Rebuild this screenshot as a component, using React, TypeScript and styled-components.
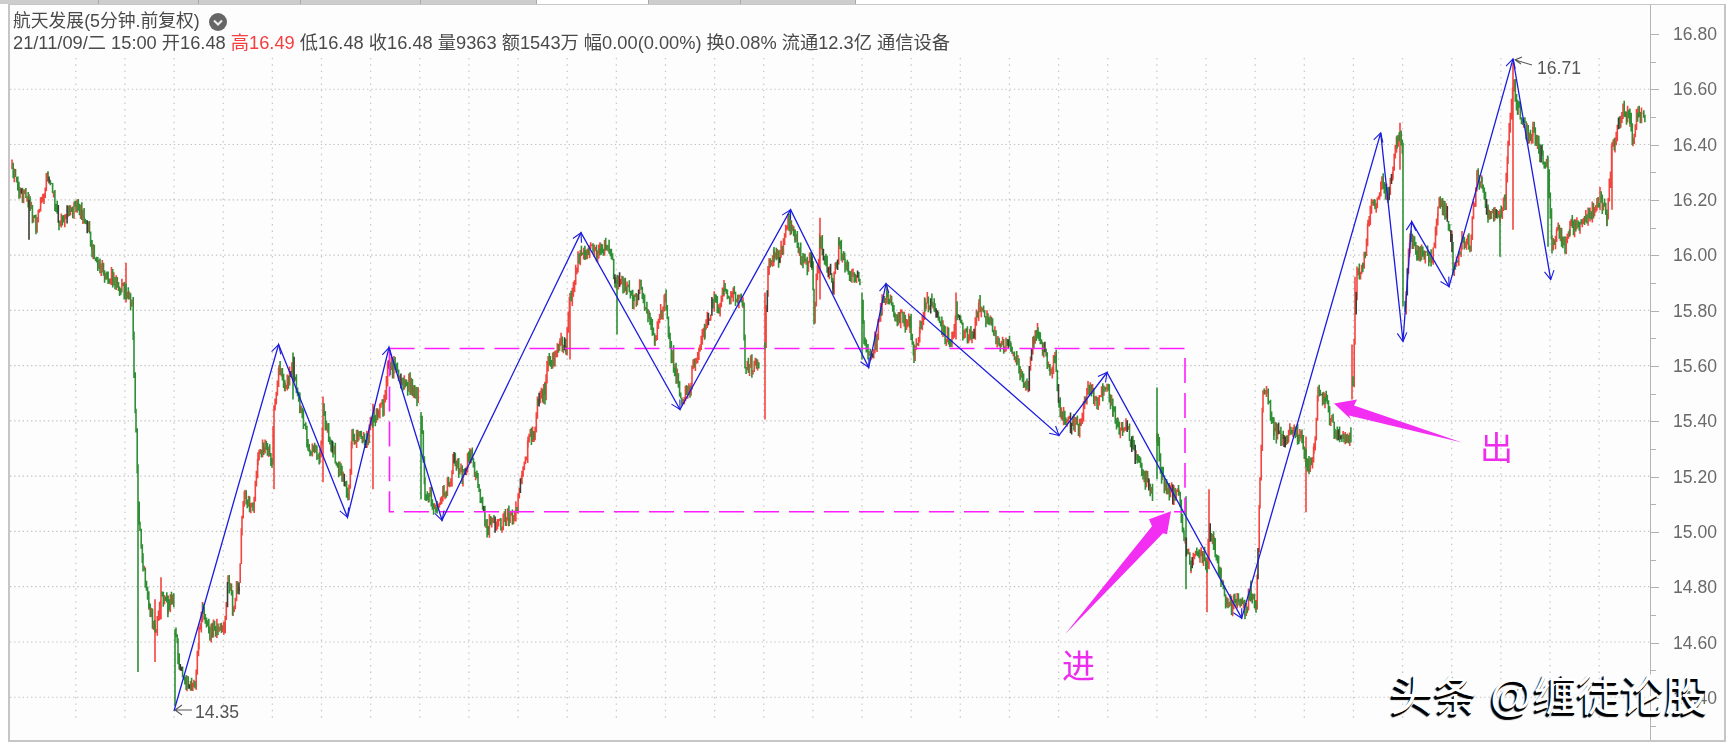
import styled, { createGlobalStyle } from "styled-components";

const FONT = `"Liberation Sans", "Noto Sans CJK SC", sans-serif`;

const GlobalStyle = createGlobalStyle`
  html, body {
    margin: 0;
    padding: 0;
    background: #fff;
    overflow: hidden;
  }
`;

const Page = styled.div`
  display: flex;
  flex-direction: column;
  width: 1729px;
  height: 743px;
  font-family: ${FONT};
  background: #fff;
`;

const TabStrip = styled.div`
  display: flex;
  flex: none;
  height: 4px;
`;

const Tab = styled.div<{ $w: number; $active?: boolean }>`
  width: ${(p) => p.$w}px;
  box-sizing: border-box;
  background: ${(p) => (p.$active ? "#fff" : "#cdcdcd")};
  border-right: 1px solid #a9a9a9;
`;

const Frame = styled.div`
  display: flex;
  flex: 1;
  min-height: 0;
  margin: 0 3px 1px 8px;
  border: 2px solid #c6c6c6;
  border-top-width: 1px;
  background: #fdfdfd;
`;

const Plot = styled.div`
  position: relative;
  flex: 1;
  min-width: 0;
`;

const ChartSvg = styled.svg`
  position: absolute;
  inset: 0;
  width: 100%;
  height: 100%;
  filter: blur(0.4px);
`;

const Legend = styled.div`
  position: relative;
  padding: 5px 0 0 3px;
  color: #4a4a4a;
  filter: blur(0.4px);
`;

const LegendTitle = styled.div`
  display: flex;
  align-items: center;
  gap: 9px;
  height: 23px;
  font-size: 17.8px;
  line-height: 23px;
`;

const LegendLine = styled.div`
  height: 20px;
  font-size: 18.25px;
  line-height: 20px;
  white-space: pre;
`;

const Up = styled.span`
  color: #f43d3d;
`;

const Axis = styled.div`
  flex: none;
  width: 74px;
  box-sizing: border-box;
  padding-top: 15.5px;
  border-left: 1px solid #b4b4b4;
  overflow: hidden;
  filter: blur(0.4px);
`;

const AxisRow = styled.div`
  display: flex;
  align-items: center;
  height: 27.675px;
  gap: 14px;
`;

const Tick = styled.i<{ $major: boolean }>`
  flex: none;
  width: ${(p) => (p.$major ? 8 : 5)}px;
  height: 1px;
  background: #b0b0b0;
`;

const AxisLabel = styled.span`
  font-size: 17.6px;
  color: #6a6a6a;
`;

const ChartText = styled.text`
  font-family: ${FONT};
  font-size: 17.6px;
  fill: #555;
`;

const NoteText = styled.text`
  font-family: ${FONT};
  font-size: 33px;
  fill: #ee2cee;
`;

const Watermark = styled.div`
  position: absolute;
  right: 21px;
  bottom: 22px;
  font-size: 43.6px;
  line-height: 50px;
  color: #fff;
  text-shadow: -1px 2px 0 #000, -2px 3px 1px #000;
  white-space: pre;
`;

type Pt = [number, number];

const segments: Pt[][] = [
  [[12, 168], [19, 190], [29, 200], [36, 226], [48, 175], [59, 220], [76, 205], [86, 220], [92, 250], [100, 270], [115, 283], [126, 290], [132, 303], [134, 373], [136, 437], [138, 497], [140, 533], [143, 567], [149, 607], [155, 635], [161, 597], [168, 607], [174, 597]],
  [[176, 630], [178, 657], [187, 685], [195, 683], [199, 633], [203, 608], [210, 633], [218, 627], [224, 630], [228, 575], [233, 610], [239, 583], [242, 517], [245, 497], [253, 513], [258, 457], [264, 447], [272, 463], [274, 415], [279, 367], [285, 393], [293, 367], [300, 407], [310, 453], [320, 457], [323, 415], [333, 450], [342, 477], [348, 503], [352, 437], [367, 440], [373, 417], [383, 410], [388, 367], [394, 367], [402, 387], [409, 383], [419, 398]],
  [[421, 413], [425, 490], [429, 497], [436, 507], [444, 493], [452, 477], [453, 457], [463, 477], [470, 453], [478, 483], [486, 527], [494, 527], [509, 517], [517, 510], [522, 477], [528, 443], [534, 433], [538, 397], [545, 393], [547, 363], [555, 357], [560, 340], [566, 348], [570, 300], [578, 260], [585, 253], [600, 250], [608, 243], [615, 280], [627, 287], [634, 303], [640, 288], [650, 320], [655, 343], [665, 297], [669, 343], [675, 370], [682, 400], [690, 393], [692, 367], [705, 330], [715, 297], [719, 313], [724, 290], [743, 302], [745, 365], [759, 370]],
  [[765, 345], [768, 270], [774, 257], [780, 257], [788, 222], [795, 237], [805, 267], [812, 260], [814, 313], [820, 240], [826, 263], [833, 287], [839, 247], [845, 267], [860, 283]],
  [[862, 297], [864, 340], [868, 357], [876, 340], [881, 307], [887, 293], [895, 317], [910, 323], [914, 360], [920, 330], [925, 303], [935, 307], [944, 333], [952, 343], [956, 313], [964, 333], [973, 337], [979, 307], [988, 320], [998, 343], [1011, 350], [1019, 370], [1027, 390], [1034, 337], [1038, 333], [1050, 370], [1055, 357], [1059, 407], [1067, 423], [1080, 427], [1088, 387], [1097, 403], [1107, 387], [1113, 410], [1118, 430], [1126, 427], [1136, 457], [1143, 477], [1149, 483], [1153, 497]],
  [[1157, 440], [1162, 478], [1167, 493], [1179, 497], [1184, 537], [1191, 567], [1200, 553], [1207, 567], [1209, 530], [1214, 543], [1221, 577], [1228, 607], [1239, 603], [1245, 610], [1251, 593], [1256, 607], [1258, 553], [1260, 480], [1263, 393], [1267, 390], [1274, 430], [1284, 440], [1293, 430], [1302, 437], [1306, 460], [1309, 467], [1314, 453], [1318, 395], [1325, 403], [1335, 433], [1344, 443], [1351, 437]],
  [[1353, 380], [1355, 310], [1357, 277], [1363, 267], [1368, 227], [1372, 197], [1375, 213], [1382, 175], [1388, 200], [1393, 167], [1397, 140], [1400, 128], [1403, 150]],
  [[1405, 303], [1410, 237], [1417, 253], [1423, 253], [1432, 263], [1438, 207], [1445, 210], [1452, 240], [1453, 275], [1462, 243], [1470, 243], [1477, 177], [1482, 187], [1488, 213], [1500, 217], [1505, 200], [1508, 147], [1513, 80], [1518, 110], [1527, 133], [1533, 133], [1543, 160], [1548, 170], [1552, 247], [1557, 227], [1565, 243], [1570, 227], [1580, 227], [1590, 213], [1600, 197], [1607, 220], [1612, 147], [1615, 143], [1623, 107], [1630, 123], [1633, 140], [1638, 113], [1645, 121]],
];

// wicks too long to come out of the random walk
const spikes: [number, number, number, "r" | "g" | "k"][] = [
  [29, 200, 240, "k"], [126, 263, 303, "r"], [138, 497, 673, "g"], [155, 600, 663, "r"],
  [161, 578, 620, "r"], [175, 630, 707, "g"], [274, 407, 490, "r"], [293, 353, 400, "g"],
  [323, 397, 483, "r"], [373, 417, 490, "r"], [421, 413, 500, "g"], [570, 300, 360, "r"],
  [617, 280, 335, "g"], [765, 293, 420, "r"], [814, 300, 325, "g"], [820, 218, 300, "r"],
  [862, 293, 360, "g"], [956, 293, 340, "r"], [1157, 388, 480, "g"], [1186, 497, 590, "g"],
  [1207, 567, 613, "r"], [1209, 490, 570, "r"], [1306, 437, 513, "r"], [1352, 345, 400, "r"],
  [1355, 277, 340, "r"], [1403, 143, 307, "g"], [1400, 123, 170, "r"], [1500, 217, 257, "g"],
  [1513, 63, 230, "r"], [1548, 160, 247, "g"], [1612, 147, 210, "r"],
];

const zigzag: Pt[] = [
  [174, 712], [278.6, 345], [347.5, 518], [389, 348], [442, 521], [581, 233], [680, 410],
  [790.6, 210], [868.7, 368], [886, 284], [1059, 436], [1107, 373], [1241.7, 619],
  [1380.7, 133], [1403, 342], [1411.7, 222], [1449, 287], [1513, 59], [1550.7, 280],
];

const mulberry = (seed: number) => () => {
  seed = (seed + 0x6d2b79f5) | 0;
  let t = Math.imul(seed ^ (seed >>> 15), 1 | seed);
  t = (t + Math.imul(t ^ (t >>> 7), 61 | t)) ^ t;
  return ((t ^ (t >>> 14)) >>> 0) / 4294967296;
};

const buildBars = () => {
  const rnd = mulberry(20211109);
  const paths = { r: "", g: "", k: "" };
  for (const seg of segments) {
    let prev = seg[0][1];
    for (let i = 0; i < seg.length - 1; i++) {
      const [x0, y0] = seg[i];
      const [x1, y1] = seg[i + 1];
      for (let x = x0; x < x1; x += 1.15) {
        const base = y0 + ((x - x0) / (x1 - x0)) * (y1 - y0);
        const close = base + (rnd() - 0.5) * 14;
        const top = Math.min(prev, close) - rnd() * 6;
        const bot = Math.max(prev, close) + rnd() * 6;
        const key = rnd() < 0.05 ? "k" : close < prev ? "r" : "g";
        paths[key] += `M${x.toFixed(1)} ${top.toFixed(1)}V${bot.toFixed(1)}`;
        prev = close;
      }
    }
  }
  for (const [x, top, bot, key] of spikes) paths[key] += `M${x} ${top}V${bot}`;
  return paths;
};

const bars = buildBars();

const head = ([x0, y0]: Pt, [x1, y1]: Pt, len = 10) => {
  const a = Math.atan2(y0 - y1, x0 - x1);
  const b = (d: number) => `${(x1 + Math.cos(a + d) * len).toFixed(1)} ${(y1 + Math.sin(a + d) * len).toFixed(1)}`;
  return `M${b(0.5)}L${x1} ${y1}L${b(-0.5)}`;
};

const zigzagHeads = zigzag.slice(1).map((p, i) => head(zigzag[i], p)).join("");

const gridX = Array.from({ length: 32 }, (_, i) => 75.8 + i * 49.14);
const gridY = Array.from({ length: 12 }, (_, i) => 89.35 + i * 55.35);

const tabs = [99, 100, 102, 120, 116, 112, 92, 115];
const prices = Array.from({ length: 26 }, (_, i) => 16.8 - i * 0.1);

const Chart = () => (
  <ChartSvg viewBox="10 5 1640 736" preserveAspectRatio="none">
    <g stroke="#c4c4c4" strokeWidth="1.2" strokeDasharray="1.4 5">
      {gridX.map((x) => (
        <line key={x} x1={x} y1={58} x2={x} y2={722} />
      ))}
    </g>
    <g stroke="#c4c4c4" strokeWidth="1.2" strokeDasharray="1.4 2.8">
      {gridY.map((y) => (
        <line key={y} x1={10} y1={y} x2={1650} y2={y} />
      ))}
    </g>
    <g fill="none" strokeWidth="1.6">
      <path d={bars.r} stroke="#f2453f" />
      <path d={bars.g} stroke="#2f8f35" />
      <path d={bars.k} stroke="#3c3c34" />
    </g>
    <rect x={389.5} y={349} width={795.5} height={163.5} fill="none" stroke="#ff1cff" strokeWidth="1.6" strokeDasharray="25 10" />
    <g fill="none" stroke="#1b1be0" strokeWidth="1.3">
      <polyline points={zigzag.map((p) => p.join(",")).join(" ")} />
      <path d={zigzagHeads} strokeWidth="1.1" />
    </g>
    <g fill="none" stroke="#555" strokeWidth="1.1">
      <path d="M175 711H192M182 706L175 711L182 716" />
      <path d="M1515 60L1532 65M1522 57L1515 60L1521 64" />
    </g>
    <ChartText x={195} y={719}>14.35</ChartText>
    <ChartText x={1537} y={74}>16.71</ChartText>
    <polygon points="1065,635 1152,527 1149,520 1171,512 1167,535 1163,534" fill="#f22ef2" />
    <polygon points="1462,443 1349,416 1351,420 1334,404 1357,400 1354,406" fill="#f22ef2" />
    <NoteText x={1062} y={679}>进</NoteText>
    <NoteText x={1480} y={461}>出</NoteText>
  </ChartSvg>
);

export default function App() {
  return (
    <Page>
      <GlobalStyle />
      <TabStrip>
        {tabs.map((w, i) => (
          <Tab key={i} $w={w} $active={i === 5} />
        ))}
      </TabStrip>
      <Frame>
        <Plot>
          <Chart />
          <Legend>
            <LegendTitle>
              航天发展(5分钟.前复权)
              <svg width="18" height="18" viewBox="0 0 18 18">
                <circle cx="9" cy="9" r="9" fill="#666" />
                <path d="M5 7.5L9 11.5L13 7.5" fill="none" stroke="#eee" strokeWidth="2" />
              </svg>
            </LegendTitle>
            <LegendLine>
              21/11/09/二 15:00 开16.48 <Up>高16.49</Up> 低16.48 收16.48 量9363 额1543万 幅0.00(0.00%) 换0.08% 流通12.3亿 通信设备
            </LegendLine>
          </Legend>
        </Plot>
        <Axis>
          {prices.map((p, i) => (
            <AxisRow key={i}>
              <Tick $major={i % 2 === 0} />
              {i % 2 === 0 && <AxisLabel>{p.toFixed(2)}</AxisLabel>}
            </AxisRow>
          ))}
        </Axis>
      </Frame>
      <Watermark>头条 @缠徒论股</Watermark>
    </Page>
  );
}
